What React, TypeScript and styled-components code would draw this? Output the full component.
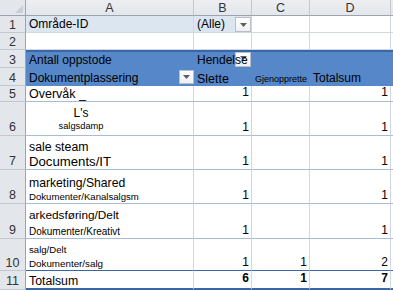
import React from "react";
import styled, { createGlobalStyle, css } from "styled-components";

const GlobalStyle = createGlobalStyle`
  html, body { margin: 0; padding: 0; background: #ffffff; }
  body { font-family: "Liberation Sans", Arial, sans-serif; }
`;

const GRID = "#d0d7e5";
const BODY_LINE = "#a7bdd6";
const BLUE = "#5587c9";
const DARK_BLUE = "#3b66a6";
const PAGE_BG = "#dce6f1";
const HEAD_BG = "#e3e6eb";
const HEAD_LINE = "#c3c8cf";
const HEAD_EDGE = "#9aa3ae";

const Sheet = styled.div`
  display: grid;
  grid-template-columns: 26px 168px 58px 58px 81px 2px;
  grid-template-rows: 16px 17px 17px 18px 18px 16px 34px 34px 34px 35px 32px 19px;
  width: 393px;
  height: 290px;
  overflow: hidden;
  font-family: "Liberation Sans", Arial, sans-serif;
  color: #000;
`;

const Corner = styled.div`
  box-sizing: border-box;
  position: relative;
  background: ${HEAD_BG};
  border-right: 1px solid ${HEAD_EDGE};
  border-bottom: 1px solid ${HEAD_EDGE};
  &::after {
    content: "";
    position: absolute;
    right: 2px;
    bottom: 2px;
    border-left: 8px solid transparent;
    border-bottom: 8px solid #c9ced5;
  }
`;

const ColHead = styled.div<{ $last?: boolean }>`
  box-sizing: border-box;
  background: linear-gradient(#eceef1, ${HEAD_BG});
  border-right: ${(p) => (p.$last ? "none" : `1px solid ${HEAD_LINE}`)};
  border-bottom: 1px solid ${HEAD_EDGE};
  display: flex;
  align-items: flex-end;
  justify-content: center;
  font-size: 12.5px;
  line-height: 12px;
  color: #333;
  padding-bottom: 1px;
`;

const RowHead = styled.div<{ $pb?: number }>`
  box-sizing: border-box;
  background: ${HEAD_BG};
  border-right: 1px solid ${HEAD_EDGE};
  border-bottom: 1px solid ${HEAD_LINE};
  display: flex;
  align-items: flex-end;
  justify-content: center;
  font-size: 12.5px;
  line-height: 14px;
  color: #333;
  padding-bottom: ${(p) => p.$pb ?? 0}px;
`;

type Variant = "page" | "plain" | "headTop" | "headBottom" | "body" | "bodyLast" | "total";

const variants: Record<Variant, ReturnType<typeof css>> = {
  page: css`
    background: ${PAGE_BG};
    border-right: 1px solid ${GRID};
    border-bottom: 1px solid ${GRID};
  `,
  plain: css`
    background: #fff;
    border-right: 1px solid ${GRID};
    border-bottom: 1px solid ${GRID};
  `,
  headTop: css`
    background: ${BLUE};
    border-top: 2px solid ${DARK_BLUE};
  `,
  headBottom: css`
    background: ${BLUE};
  `,
  body: css`
    background: #fff;
    border-right: 1px solid ${GRID};
    border-bottom: 1px solid ${BODY_LINE};
  `,
  bodyLast: css`
    background: #fff;
    border-right: 1px solid ${GRID};
    border-bottom: 1px solid ${DARK_BLUE};
  `,
  total: css`
    background: #fff;
    border-right: 1px solid ${GRID};
    border-bottom: 2px solid ${DARK_BLUE};
  `,
};

const Cell = styled.div<{
  $v: Variant;
  $align?: "left" | "right" | "center";
  $pb?: number;
  $size?: number;
  $bold?: boolean;
}>`
  box-sizing: border-box;
  position: relative;
  display: flex;
  flex-direction: column;
  justify-content: flex-end;
  align-items: ${(p) =>
    p.$align === "right" ? "flex-end" : p.$align === "center" ? "center" : "flex-start"};
  padding: 0 2px ${(p) => p.$pb ?? 0}px 3px;
  font-size: ${(p) => p.$size ?? 12}px;
  line-height: 1.15;
  font-weight: ${(p) => (p.$bold ? 700 : 400)};
  white-space: nowrap;
  overflow: visible;
  ${(p) => variants[p.$v]}
`;

const Line = styled.span<{ $size: number; $mb?: number }>`
  display: block;
  font-size: ${(p) => p.$size}px;
  line-height: 1.15;
  margin-bottom: ${(p) => p.$mb ?? 0}px;
  position: relative;
  z-index: 1;
`;

const CenterBlock = styled.div`
  width: 104px;
  display: flex;
  flex-direction: column;
  align-items: center;
`;

const DropBtn = styled.span<{ $top: number; $right: number; $w: number; $h: number; $arrowTop?: boolean }>`
  position: absolute;
  top: ${(p) => p.$top}px;
  right: ${(p) => p.$right}px;
  width: ${(p) => p.$w}px;
  height: ${(p) => p.$h}px;
  box-sizing: border-box;
  background: linear-gradient(#ffffff, #eef0f3);
  border: 1px solid #b9bec6;
  display: flex;
  justify-content: center;
  align-items: ${(p) => (p.$arrowTop ? "flex-start" : "center")};
  padding-top: ${(p) => (p.$arrowTop ? 3 : 0)}px;
  z-index: 0;
`;

const Arrow = () => (
  <svg width="7" height="4" viewBox="0 0 7 4">
    <path d="M0 0 H7 L3.5 4 Z" fill="#5f5f5f" />
  </svg>
);

const Small = styled.span<{ $size: number }>`
  font-size: ${(p) => p.$size}px;
`;

type DataRow = {
  n: string;
  rowPb?: number;
  a: React.ReactNode;
  aPb?: number;
  b?: string;
  c?: string;
  d?: string;
  numPb?: number;
};

const dataRows: DataRow[] = [
  { n: "5", rowPb: 0, a: <Line $size={12.5}>Overvåk _</Line>, aPb: 0, b: "1", d: "1", numPb: 1 },
  {
    n: "6",
    rowPb: 1,
    a: (
      <CenterBlock>
        <Line $size={12} $mb={1}>L's</Line>
        <Line $size={9.3}>salgsdamp</Line>
      </CenterBlock>
    ),
    aPb: 3,
    b: "1",
    d: "1",
  },
  {
    n: "7",
    rowPb: 1,
    a: (
      <>
        <Line $size={12.3} $mb={0}>sale steam</Line>
        <Line $size={13.2}>Documents/IT</Line>
      </>
    ),
    aPb: 0,
    b: "1",
    d: "1",
  },
  {
    n: "8",
    rowPb: 1,
    a: (
      <>
        <Line $size={12.2} $mb={1}>marketing/Shared</Line>
        <Line $size={9.6}>Dokumenter/Kanalsalgsm</Line>
      </>
    ),
    aPb: 1,
    b: "1",
    d: "1",
  },
  {
    n: "9",
    rowPb: 1,
    a: (
      <>
        <Line $size={11.8} $mb={3}>arkedsføring/Delt</Line>
        <Line $size={10}>Dokumenter/Kreativt</Line>
      </>
    ),
    aPb: 1,
    b: "1",
    d: "1",
  },
  {
    n: "10",
    rowPb: 0,
    a: (
      <>
        <Line $size={9.6} $mb={3}>salg/Delt</Line>
        <Line $size={9.8}>Dokumenter/salg</Line>
      </>
    ),
    aPb: 1,
    b: "1",
    c: "1",
    d: "2",
    numPb: 0,
  },
];

export default function App() {
  return (
    <>
      <GlobalStyle />
      <Sheet>
        <Corner />
        <ColHead>A</ColHead>
        <ColHead>B</ColHead>
        <ColHead>C</ColHead>
        <ColHead>D</ColHead>
        <ColHead $last />

        <RowHead>1</RowHead>
        <Cell $v="page" $pb={0}>Område-ID</Cell>
        <Cell $v="page" $pb={0}>
          (Alle)
          <DropBtn $top={1} $right={0} $w={16} $h={15}>
            <Arrow />
          </DropBtn>
        </Cell>
        <Cell $v="plain" />
        <Cell $v="plain" />
        <Cell $v="plain" />

        <RowHead>2</RowHead>
        <Cell $v="plain" />
        <Cell $v="plain" />
        <Cell $v="plain" />
        <Cell $v="plain" />
        <Cell $v="plain" />

        <RowHead>3</RowHead>
        <Cell $v="headTop" $pb={0}>Antall oppstode</Cell>
        <Cell $v="headTop" $pb={0}>
          <DropBtn $top={0} $right={1} $w={16} $h={15} $arrowTop>
            <Arrow />
          </DropBtn>
          <Line $size={12}>Hendelse</Line>
        </Cell>
        <Cell $v="headTop" />
        <Cell $v="headTop" />
        <Cell $v="headTop" />

        <RowHead>4</RowHead>
        <Cell $v="headBottom" $pb={0}>
          Dokumentplassering
          <DropBtn $top={2} $right={0} $w={15} $h={14}>
            <Arrow />
          </DropBtn>
        </Cell>
        <Cell $v="headBottom" $pb={0} $size={12.5}>Slette</Cell>
        <Cell $v="headBottom" $pb={2}>
          <Small $size={9}>Gjenopprette</Small>
        </Cell>
        <Cell $v="headBottom" $pb={0}>Totalsum</Cell>
        <Cell $v="headBottom" />

        {dataRows.map((r, i) => {
          const v: Variant = i === dataRows.length - 1 ? "bodyLast" : "body";
          return (
            <React.Fragment key={r.n}>
              <RowHead $pb={r.rowPb}>{r.n}</RowHead>
              <Cell $v={v} $pb={r.aPb}>{r.a}</Cell>
              <Cell $v={v} $align="right" $pb={r.numPb ?? 0}>{r.b}</Cell>
              <Cell $v={v} $align="right" $pb={r.numPb ?? 0}>{r.c}</Cell>
              <Cell $v={v} $align="right" $pb={r.numPb ?? 0}>{r.d}</Cell>
              <Cell $v={v} />
            </React.Fragment>
          );
        })}

        <RowHead $pb={1}>11</RowHead>
        <Cell $v="total" $pb={0} $size={12.3}>Totalsum</Cell>
        <Cell $v="total" $align="right" $pb={2} $bold>6</Cell>
        <Cell $v="total" $align="right" $pb={2} $bold>1</Cell>
        <Cell $v="total" $align="right" $pb={2} $bold>7</Cell>
        <Cell $v="total" />
      </Sheet>
    </>
  );
}
